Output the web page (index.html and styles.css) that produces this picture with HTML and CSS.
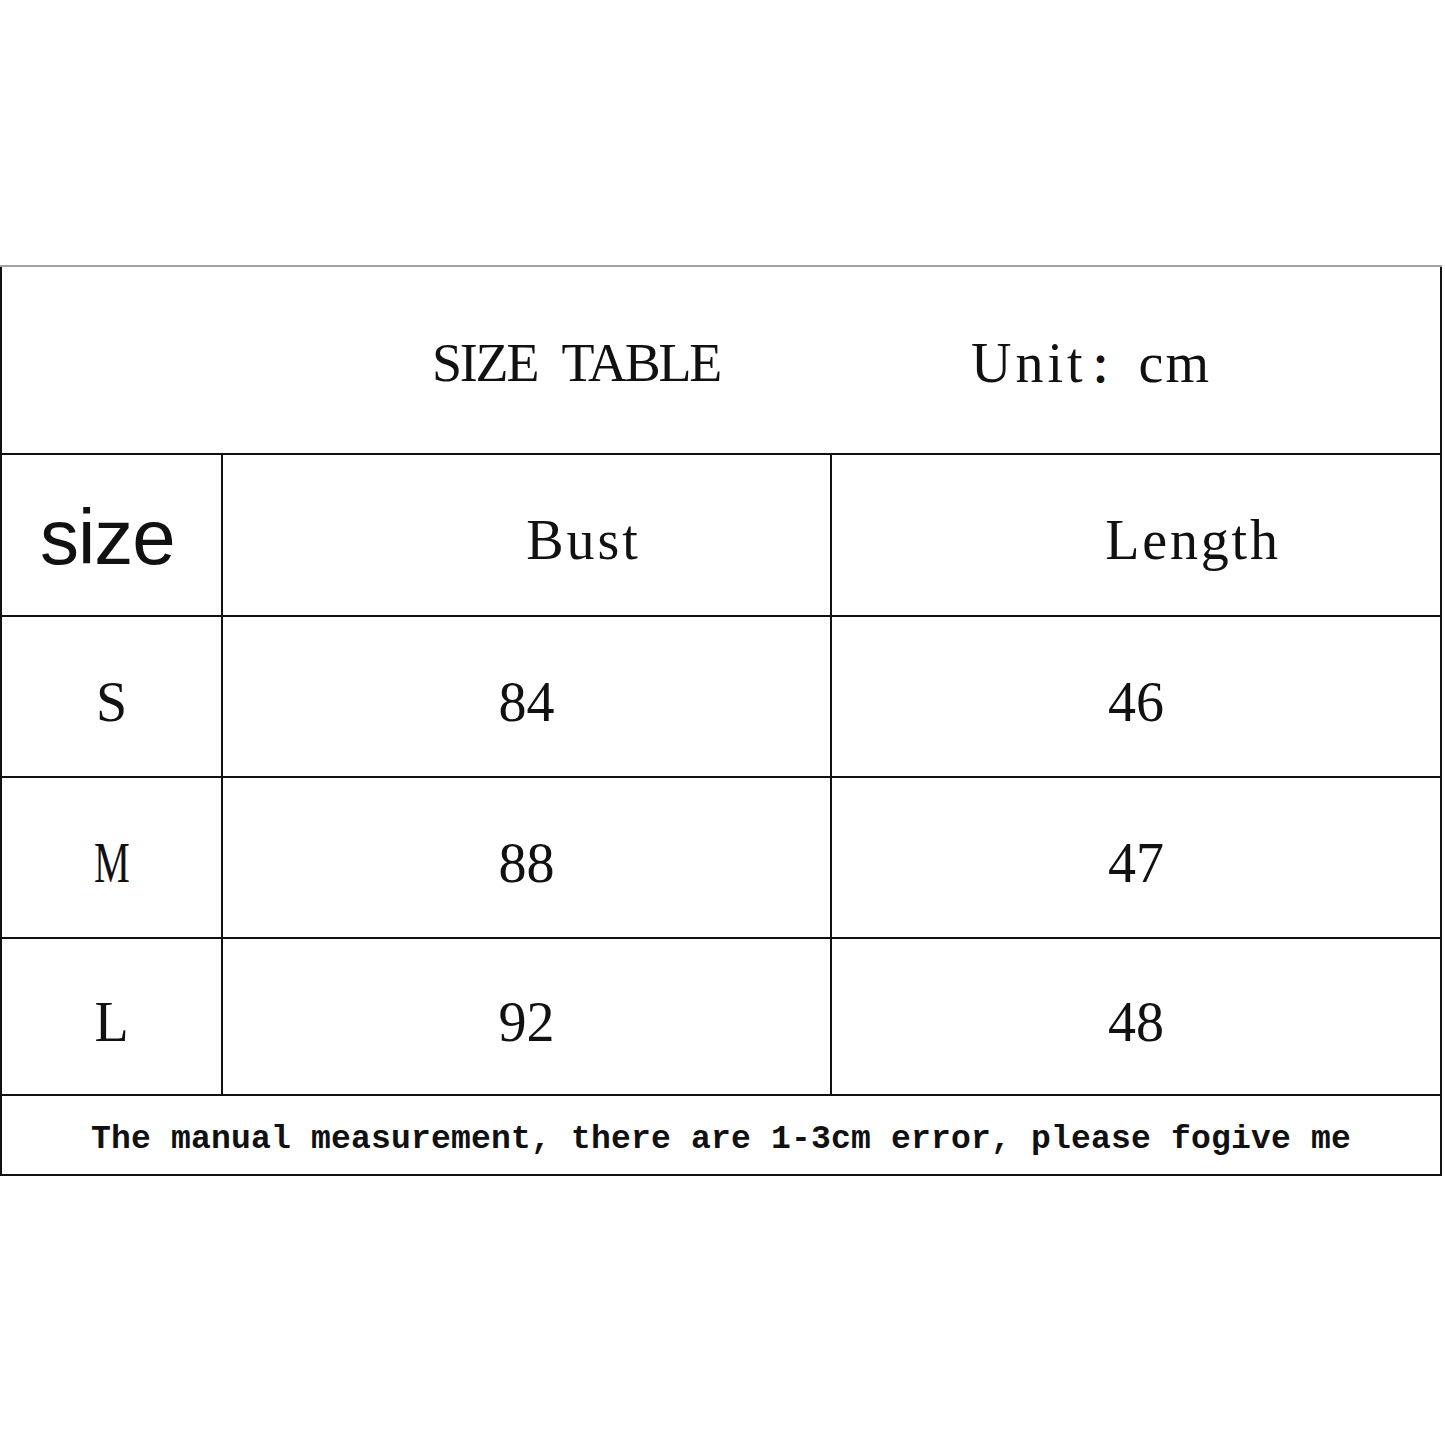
FILE: index.html
```html
<!DOCTYPE html>
<html lang="en">
<head>
<meta charset="utf-8">
<title>Size Table</title>
<link rel="stylesheet" href="styles.css">
</head>
<body>
<div class="sheet">
  <div class="cell head">
    <span class="title">SIZE TABLE</span>
    <span class="unit"><span class="unit-word">Unit</span><span class="colon">：</span><span class="unit-cm">cm</span></span>
  </div>
  <div class="cell label"><span class="size-word">size</span></div>
  <div class="cell col-head"><span class="bust">Bust</span></div>
  <div class="cell col-head"><span class="length">Length</span></div>

  <div class="cell val">S</div>
  <div class="cell val">84</div>
  <div class="cell val">46</div>

  <div class="cell val"><span class="narrow">M</span></div>
  <div class="cell val">88</div>
  <div class="cell val">47</div>

  <div class="cell val">L</div>
  <div class="cell val">92</div>
  <div class="cell val">48</div>

  <div class="cell note">The manual measurement, there are 1-3cm error, please fogive me</div>
</div>
</body>
</html>
```

FILE: styles.css
```css
html, body {
  margin: 0;
  padding: 0;
  background: #ffffff;
}

body {
  font-family: "Liberation Serif", "Times New Roman", serif;
  color: #111111;
}

.sheet {
  margin-top: 265px;
  width: 1442px;
  box-sizing: border-box;
  display: grid;
  grid-template-columns: 219px 607px 608px;
  grid-template-rows: 186px 160px 159px 159px 155px 78px;
  gap: 2px;
  padding: 0 2px 2px 2px;
  border-top: 2px solid #a0a0a0;
  background: #111111;
}

.cell {
  background: #ffffff;
  display: flex;
  align-items: center;
  justify-content: center;
  box-sizing: border-box;
  padding-top: 10px;
}

.head {
  grid-column: 1 / 4;
  justify-content: flex-start;
  padding-left: 430px;
  padding-top: 6px;
}

.title {
  width: 539px;
  font-size: 54px;
  letter-spacing: -2.2px;
  word-spacing: 14px;
  white-space: nowrap;
}

.unit {
  font-size: 56px;
  white-space: nowrap;
  display: flex;
  align-items: baseline;
}

.unit-word {
  letter-spacing: 4px;
}

.colon {
  font-family: "Noto Sans CJK SC", sans-serif;
  font-size: 40px;
  font-weight: 700;
  margin-left: 4px;
}

.unit-cm {
  margin-left: 8px;
  letter-spacing: 2px;
}

.label {
  justify-content: flex-start;
  padding-left: 38px;
  padding-top: 4px;
}

.size-word {
  font-family: "Liberation Sans", Arial, sans-serif;
  font-size: 78px;
  letter-spacing: -1px;
}

.col-head {
  padding-left: 114px;
  font-size: 56px;
}

.bust {
  letter-spacing: 3px;
}

.length {
  letter-spacing: 2.8px;
}

.val {
  font-size: 56px;
}

.narrow {
  display: inline-block;
  transform: scaleX(0.72);
}

.note {
  grid-column: 1 / 4;
  padding-top: 9px;
  font-family: "Liberation Mono", "Courier New", monospace;
  font-weight: 700;
  font-size: 33px;
  letter-spacing: 0.2px;
  white-space: pre;
}
```
